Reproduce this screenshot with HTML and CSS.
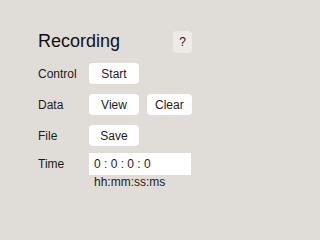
FILE: index.html
```html
<!DOCTYPE html>
<html>
<head>
<meta charset="utf-8">
<link rel="stylesheet" href="styles.css">
</head>
<body>
<div class="panel">
  <div class="header">
    <h1 class="title">Recording</h1>
    <button class="help">?</button>
  </div>
  <div class="row">
    <span class="label">Control</span>
    <div class="controls"><button class="btn wide">Start</button></div>
  </div>
  <div class="row">
    <span class="label">Data</span>
    <div class="controls"><button class="btn wide">View</button><button class="btn">Clear</button></div>
  </div>
  <div class="row">
    <span class="label">File</span>
    <div class="controls"><button class="btn wide">Save</button></div>
  </div>
  <div class="row time">
    <span class="label">Time</span>
    <div class="time-box">
      <div class="time-input">0 : 0 : 0 : 0</div>
      <div class="hint">hh:mm:ss:ms</div>
    </div>
  </div>
</div>
</body>
</html>
```
FILE: styles.css
```css
html, body {
  margin: 0;
  padding: 0;
  background: #e0ddd9;
}
body {
  width: 250px;
  height: 229px;
  font-family: "Liberation Sans", Arial, sans-serif;
  color: #1c1c1c;
}
.panel {
  padding: 31px 0 0 38px;
  width: 153px;
}
.header {
  display: flex;
  justify-content: space-between;
  align-items: flex-start;
}
.title {
  margin: 0;
  font-size: 18px;
  font-weight: normal;
  line-height: 20px;
  color: #111;
}
.help {
  width: 19px;
  height: 22px;
  margin-right: -1px;
  border: none;
  border-radius: 4px;
  background: #ecebe8;
  padding: 0;
  font-family: "Liberation Sans", Arial, sans-serif;
  font-size: 12px;
  color: #1c1c1c;
}
.row {
  display: flex;
  align-items: baseline;
  margin-top: 10px;
}
.row.time {
  margin-top: 7px;
}
.label {
  width: 51px;
  font-size: 12px;
  flex: none;
}
.controls {
  display: flex;
  gap: 8px;
}
.btn {
  height: 21px;
  border: none;
  border-radius: 4px;
  background: #fff;
  padding: 0 8px;
  font-family: "Liberation Sans", Arial, sans-serif;
  font-size: 12px;
  color: #1c1c1c;
}
.btn.wide {
  width: 50px;
}
.time-box {
  display: flex;
  flex-direction: column;
}
.time-input {
  width: 97px;
  height: 22px;
  line-height: 22px;
  padding-left: 5px;
  background: #fff;
  font-size: 12px;
}
.hint {
  padding-left: 5px;
  font-size: 12px;
  line-height: 15px;
}
```
